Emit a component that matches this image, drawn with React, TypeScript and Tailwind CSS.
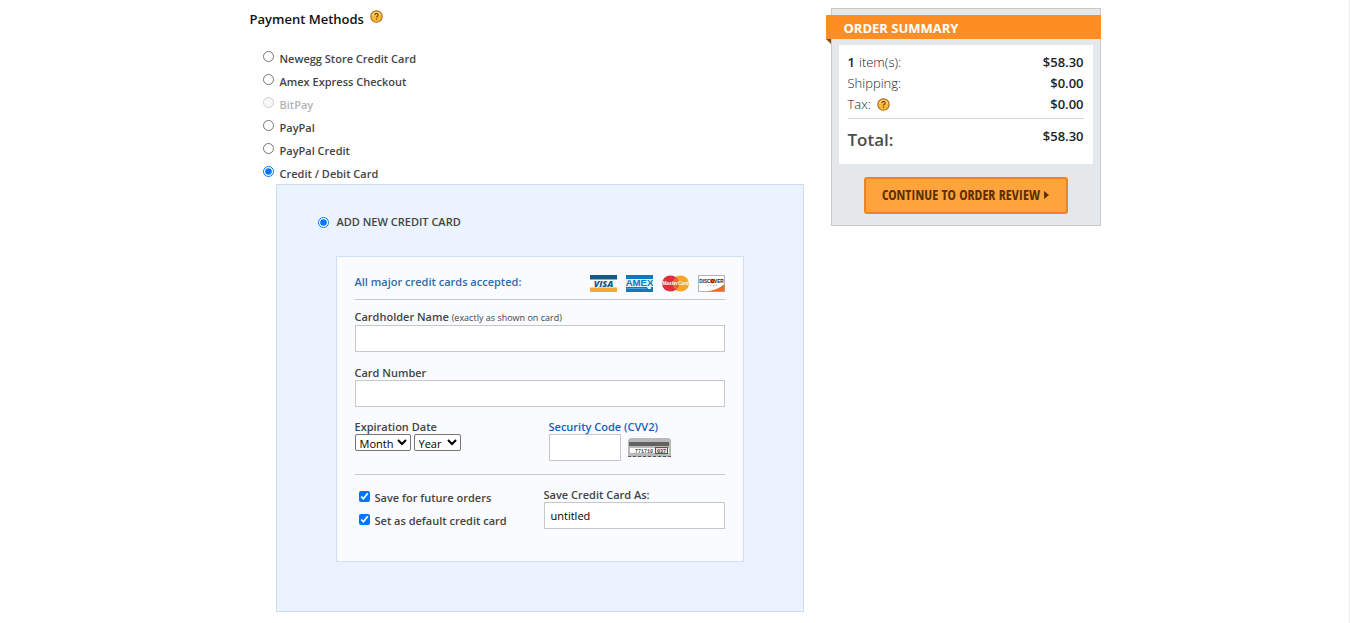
import React, { useState } from "react";

// ============ Data ============

const METHODS = [
  { id: "store", label: "Newegg Store Credit Card" },
  { id: "amex", label: "Amex Express Checkout" },
  { id: "bitpay", label: "BitPay", disabled: true },
  { id: "paypal", label: "PayPal" },
  { id: "paypal-credit", label: "PayPal Credit" },
  { id: "card", label: "Credit / Debit Card" },
];

const MONTHS = ["01", "02", "03", "04", "05", "06", "07", "08", "09", "10", "11", "12"];
const YEARS = ["2021", "2022", "2023", "2024", "2025", "2026"];

const FIELD = "block h-[27px] border border-[#c8c8c8] bg-white px-[6px] text-[11px] text-black";
const LABEL = "block leading-[14px]";
const SELECT = "h-[17px] rounded-[2px] border border-[#767676] bg-white text-[11px] text-black";

// ============ Icons ============

const HelpIcon = () => (
  <svg width="13" height="13" viewBox="0 0 13 13" aria-hidden="true">
    <circle cx="6.5" cy="6.5" r="5.7" fill="#f8b935" stroke="#a8691c" strokeWidth="1.1" />
    <path d="M2.4 5.6a4.3 4.3 0 0 1 8.2 0" fill="none" stroke="#ffdf8a" strokeWidth="1.2" />
    <path d="M4.8 5c0-2.1 3.4-2.1 3.4-.1 0 1.3-1.7 1.3-1.7 2.6" fill="none" stroke="#7d480a" strokeWidth="1.1" />
    <rect x="5.9" y="8.5" width="1.2" height="1.3" fill="#7d480a" />
  </svg>
);

const VisaLogo = () => (
  <svg width="27" height="17" viewBox="0 0 27 17" role="img" aria-label="Visa">
    <rect width="27" height="17" fill="#fff" />
    <rect width="27" height="4.5" fill="#155a86" />
    <rect y="12.5" width="27" height="4.5" fill="#f9a838" />
    <text x="13.5" y="11.8" textAnchor="middle" fontFamily="Open Sans, sans-serif" fontSize="9" fontWeight="800" fontStyle="italic" fill="#155a86">VISA</text>
  </svg>
);

const AmexLogo = () => (
  <svg width="27" height="17" viewBox="0 0 27 17" role="img" aria-label="American Express">
    <rect width="27" height="17" fill="#1277bd" />
    <rect y="4" width="27" height="8" fill="#e3f1fa" />
    <path d="M0 13.5h20" stroke="#4b9dd3" strokeWidth="1" />
    <path d="M21 12h4v2h-3z" fill="#e3f1fa" />
    <text x="13.5" y="11.2" textAnchor="middle" fontFamily="Liberation Sans, sans-serif" fontSize="9.6" fontWeight="700" fill="#1277bd">AMEX</text>
  </svg>
);

const MasterCardLogo = () => (
  <svg width="27" height="17" viewBox="0 0 27 17" role="img" aria-label="MasterCard">
    <ellipse cx="18.5" cy="8.5" rx="8.5" ry="8" fill="#f9a526" />
    <ellipse cx="8.5" cy="8.5" rx="8.5" ry="8" fill="#e02e3d" />
    <path d="M13.5 2.2a8.2 8.2 0 0 1 0 12.6a8.2 8.2 0 0 1 0-12.6" fill="#ee6831" />
    <text x="13.5" y="10.4" textAnchor="middle" fontFamily="Liberation Sans, sans-serif" fontSize="4.8" fontWeight="700" fontStyle="italic" fill="#fff">MasterCard</text>
  </svg>
);

const DiscoverLogo = () => (
  <svg width="27" height="17" viewBox="0 0 27 17" role="img" aria-label="Discover">
    <rect x=".5" y=".5" width="26" height="16" fill="#fff" stroke="#b4b4b4" />
    <path d="M26.5 9v7.5H8C16 15.5 22 13 26.5 9z" fill="#f36a25" />
    <circle cx="14.4" cy="6.2" r="2.4" fill="#f36a25" />
    <text x="13.5" y="8" textAnchor="middle" fontFamily="Liberation Sans, sans-serif" fontSize="4.7" fontWeight="700" fill="#222">DISCOVER</text>
    <path d="M9 10.5h10" stroke="#aaa" strokeWidth=".7" strokeDasharray="1 .5" />
  </svg>
);

const CardBackIcon = () => (
  <svg width="43" height="19" viewBox="0 0 43 19" role="img" aria-label="Back of card">
    <path d="M2 0h39l2 2v17H0V2z" fill="#b9b9b9" />
    <rect x="1" y="4" width="40" height="4" fill="#626262" />
    <rect x="2" y="10" width="39" height="5" fill="#fff" />
    <rect x="27.5" y="9.5" width="12" height="6" fill="#f3dede" stroke="#d21f2b" />
    <text x="7" y="14.5" fontFamily="Liberation Mono, monospace" fontSize="5" fontWeight="700" fill="#444">771710</text>
    <text x="29" y="14.5" fontFamily="Liberation Mono, monospace" fontSize="5" fontWeight="700" fill="#444">037</text>
    <path d="M0 18.5h43" stroke="#555" strokeDasharray="3 2" />
  </svg>
);

// ============ Card form ============

const CardForm: React.FC = () => (
  <div className="mx-[59px] mt-[26px] border border-[#d2dfee] bg-[#fafbff] px-[18px] pb-[27px]">
    <div className="flex items-center justify-between border-b border-[#c8c8c8] pt-[15px] pb-[7px]">
      <p className="leading-5 text-[#2f6ca6]">All major credit cards accepted:</p>
      <div className="flex gap-[9px] pt-[3px]">
        <VisaLogo />
        <AmexLogo />
        <MasterCardLogo />
        <DiscoverLogo />
      </div>
    </div>

    <div className="mt-[10px]">
      <label htmlFor="holder" className={LABEL}>
        Cardholder Name <span className="text-[9px] font-normal">(exactly as shown on card)</span>
      </label>
      <input id="holder" type="text" className={`${FIELD} w-full`} />
    </div>

    <div className="mt-[14px]">
      <label htmlFor="number" className={LABEL}>Card Number</label>
      <input id="number" type="text" className={`${FIELD} w-full`} />
    </div>

    <div className="mt-[13px] flex border-b border-[#c8c8c8] pb-[13px]">
      <fieldset className="w-[194px]">
        <legend className={LABEL}>Expiration Date</legend>
        <div className="flex gap-[3px] font-normal">
          <select aria-label="Month" className={`${SELECT} w-14`}>
            <option>Month</option>
            {MONTHS.map((m) => <option key={m}>{m}</option>)}
          </select>
          <select aria-label="Year" className={`${SELECT} w-[47px]`}>
            <option>Year</option>
            {YEARS.map((y) => <option key={y}>{y}</option>)}
          </select>
        </div>
      </fieldset>
      <div>
        <label htmlFor="cvv" className={`${LABEL} text-[#1560bd]`}>Security Code (CVV2)</label>
        <div className="flex items-center gap-[7px]">
          <input id="cvv" type="text" className={`${FIELD} w-[72px]`} />
          <CardBackIcon />
        </div>
      </div>
    </div>

    <div className="flex pt-[13px]">
      <div className="w-[189px] pl-1">
        <label className="flex h-[23px] items-start gap-[5px] pt-[3px]">
          <input type="checkbox" defaultChecked className="size-[11px]" />
          <span className="leading-[14px]">Save for future orders</span>
        </label>
        <label className="flex h-[23px] items-start gap-[5px] pt-[3px]">
          <input type="checkbox" defaultChecked className="size-[11px]" />
          <span className="leading-[14px]">Set as default credit card</span>
        </label>
      </div>
      <div className="flex-1">
        <label htmlFor="alias" className={LABEL}>Save Credit Card As:</label>
        <input id="alias" type="text" defaultValue="untitled" className={`${FIELD} w-full font-normal`} />
      </div>
    </div>
  </div>
);

// ============ Order summary ============

const SummaryRow: React.FC<{ label: React.ReactNode; value: string }> = ({ label, value }) => (
  <div className="flex justify-between text-[13px] leading-[21px]">
    <dt className="flex items-center font-light text-[#222]">{label}</dt>
    <dd className="font-semibold text-[#222]">{value}</dd>
  </div>
);

const OrderSummary: React.FC = () => (
  <aside className="mt-2 w-[270px] shrink-0 self-start border border-[#c8c8c8] bg-[#e4e8eb] pt-[6px] pb-[11px]">
    <div className="relative -mr-px -ml-[6px] bg-[#fe8e24] pt-[2px] pl-[18px]">
      <h2 className="text-[13px] leading-[22px] font-bold text-white">ORDER SUMMARY</h2>
      <span className="absolute top-full left-0 border-t-[5px] border-l-[5px] border-t-[#8a4606] border-l-transparent" />
    </div>
    <dl className="mx-[7px] mt-[6px] bg-white px-[9px] pt-[7px] pb-3">
      <SummaryRow label={<><b className="mr-1 font-semibold">1</b>item(s):</>} value="$58.30" />
      <SummaryRow label="Shipping:" value="$0.00" />
      <SummaryRow label={<><span className="mr-[6px]">Tax:</span><HelpIcon /></>} value="$0.00" />
      <div className="mt-[3px] flex justify-between border-t border-[#d8d8d8] pt-[7px]">
        <dt className="pt-[2px] text-[17px] leading-6 font-semibold text-[#4d4d4d]">Total:</dt>
        <dd className="text-[13px] leading-5 font-semibold text-[#222]">$58.30</dd>
      </div>
    </dl>
    <button
      type="button"
      className="mx-auto mt-[13px] flex h-[37px] w-[204px] items-center justify-center gap-1 rounded-[3px] border-2 border-[#e98427] bg-[#ffa33c] pb-[2px] font-['Open_Sans_Condensed','Liberation_Sans_Narrow','Open_Sans',sans-serif] text-[14px] font-bold text-[#5a2f00]"
    >
      CONTINUE TO ORDER REVIEW
      <svg width="5" height="8" viewBox="0 0 5 8" aria-hidden="true">
        <path d="M0 0l5 4-5 4z" fill="currentColor" />
      </svg>
    </button>
  </aside>
);

// ============ Page ============

const App: React.FC = () => {
  const [method, setMethod] = useState("card");

  return (
    <div className="min-h-screen border-r border-[#ececec] bg-white font-['Open_Sans',sans-serif] text-[11px] font-semibold text-[#444]">
      <div className="mx-auto flex max-w-[852px] gap-[27px]">
        <main className="min-w-0 flex-1 pb-[11px]">
          <h1 className="flex items-start gap-[6px] pt-[9px] pb-[17px] pl-[1px] text-[13px] leading-5 text-[#111]">
            Payment Methods
            <span className="pt-[1px]"><HelpIcon /></span>
          </h1>

          <div className="pl-[14px]">
            {METHODS.map((m) => (
              <label
                key={m.id}
                className={`flex h-[23px] items-start gap-[6px] pt-[5px] ${m.disabled ? "text-[#b4b4b4]" : ""}`}
              >
                <input
                  type="radio"
                  name="method"
                  disabled={m.disabled}
                  checked={method === m.id}
                  onChange={() => setMethod(m.id)}
                  className="size-[11px]"
                />
                <span className="leading-4">{m.label}</span>
              </label>
            ))}
          </div>

          <section className="ml-[27px] border border-[#ccdcee] bg-[#eaf3fe] pt-[29px] pb-[49px]">
            <label className="flex items-center gap-2 pl-[41px]">
              <input type="radio" name="card" defaultChecked className="size-[11px]" />
              <span className="leading-4">ADD NEW CREDIT CARD</span>
            </label>
            <CardForm />
          </section>
        </main>
        <OrderSummary />
      </div>
    </div>
  );
};

export default App;
